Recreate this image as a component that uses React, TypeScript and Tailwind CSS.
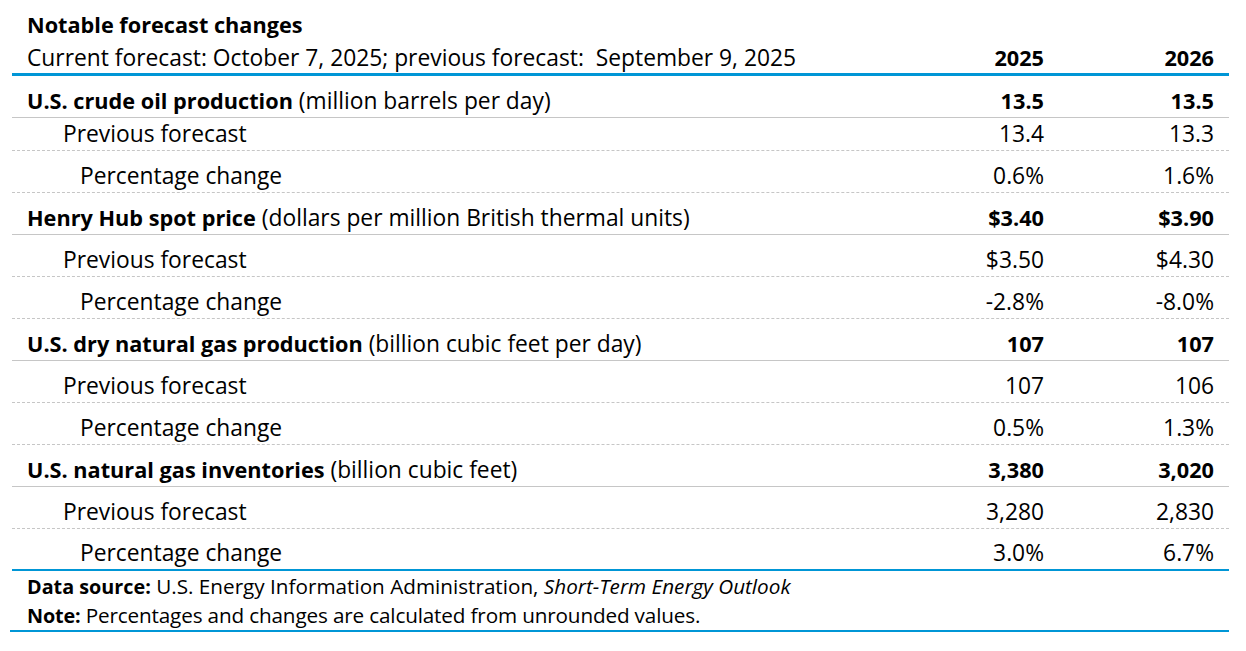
import React from "react";

type Group = {
  label: string;
  unit: string;
  v: [string, string];
  prev: [string, string];
  pct: [string, string];
};

const groups: Group[] = [
  {
    label: "U.S. crude oil production",
    unit: "(million barrels per day)",
    v: ["13.5", "13.5"],
    prev: ["13.4", "13.3"],
    pct: ["0.6%", "1.6%"],
  },
  {
    label: "Henry Hub spot price",
    unit: "(dollars per million British thermal units)",
    v: ["$3.40", "$3.90"],
    prev: ["$3.50", "$4.30"],
    pct: ["-2.8%", "-8.0%"],
  },
  {
    label: "U.S. dry natural gas production",
    unit: "(billion cubic feet per day)",
    v: ["107", "107"],
    prev: ["107", "106"],
    pct: ["0.5%", "1.3%"],
  },
  {
    label: "U.S. natural gas inventories",
    unit: "(billion cubic feet)",
    v: ["3,380", "3,020"],
    prev: ["3,280", "2,830"],
    pct: ["3.0%", "6.7%"],
  },
];

const font = { fontFamily: "'Open Sans', Lato, sans-serif" };

export default function App() {
  return (
    <div className="w-[1246px] h-[651px] bg-white text-black" style={font}>
      <div className="ml-[12px] w-[1217px]">
        {/* Header */}
        <div className="pt-[14px] pb-[5px] border-b-[3px] border-[#0096d6] text-[22.8px] leading-[21px]">
          <div className="pl-[15px] font-bold text-[21.7px]">Notable forecast changes</div>
          <div className="mt-[12px] grid grid-cols-[1fr_169px_169px]">
            <div className="pl-[15px] whitespace-pre">
              Current forecast: October 7, 2025; previous forecast:  September 9, 2025
            </div>
            <div className="text-right pr-[16px] font-bold text-[21.7px]">2025</div>
            <div className="text-right pr-[15px] font-bold text-[21.7px]">2026</div>
          </div>
        </div>

        {/* Body */}
        <div className="text-[22.8px] leading-[21px]">
          {groups.map((g, gi) => {
            const last = gi === groups.length - 1;
            return (
              <div key={g.label}>
                <div className="grid grid-cols-[1fr_169px_169px] items-end h-[42px] pb-[6px] border-b border-[#c6c6c6]">
                  <div className="pl-[15px] whitespace-nowrap">
                    <span className="font-bold text-[21.7px]">{g.label}</span> {g.unit}
                  </div>
                  <div className="text-right pr-[16px] font-bold text-[21.7px]">{g.v[0]}</div>
                  <div className="text-right pr-[15px] font-bold text-[21.7px]">{g.v[1]}</div>
                </div>
                <div
                  className={`grid grid-cols-[1fr_169px_169px] items-end pb-[6px] border-b border-dashed border-[#c6c6c6] ${
                    gi === 0 ? "h-[33px]" : "h-[42px]"
                  }`}
                >
                  <div className="pl-[51px]">Previous forecast</div>
                  <div className="text-right pr-[16px]">{g.prev[0]}</div>
                  <div className="text-right pr-[15px]">{g.prev[1]}</div>
                </div>
                <div
                  className={
                    last
                      ? "grid grid-cols-[1fr_169px_169px] items-end h-[42px] pb-[6px] border-b-2 border-[#0096d6]"
                      : "grid grid-cols-[1fr_169px_169px] items-end h-[42px] pb-[6px] border-b border-dashed border-[#c6c6c6]"
                  }
                >
                  <div className="pl-[68px]">Percentage change</div>
                  <div className="text-right pr-[16px]">{g.pct[0]}</div>
                  <div className="text-right pr-[15px]">{g.pct[1]}</div>
                </div>
              </div>
            );
          })}
        </div>

        {/* Footer */}
        <div className="-ml-[2px] w-[1219px] pt-[1px] border-b-2 border-[#0096d6] text-[20.7px] leading-[28px]">
          <div className="pl-[17px]">
            <span className="font-bold text-[19.8px]">Data source:</span> U.S. Energy Information Administration,{" "}
            <span className="italic">Short-Term Energy Outlook</span>
          </div>
          <div className="pl-[17px] tracking-[-0.15px]">
            <span className="font-bold text-[19.8px]">Note:</span> Percentages and changes are calculated from unrounded values.
          </div>
        </div>
      </div>
    </div>
  );
}
